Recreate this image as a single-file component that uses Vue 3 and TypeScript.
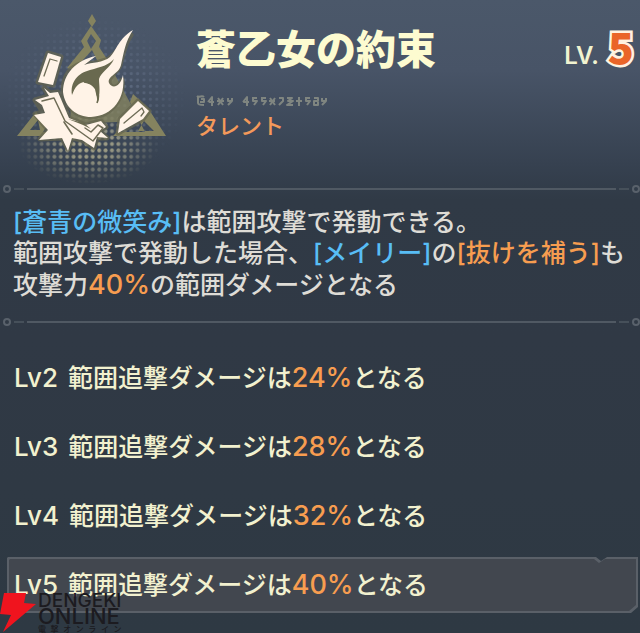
<script setup lang="ts">
type Tone = 'plain' | 'skill' | 'value' | 'value percent'

interface Segment {
  text: string
  tone: Tone
}

interface LevelBonus {
  level: number
  percent: number
}

const currentLevel = 5

const description: Segment[][] = [
  [
    { text: '[蒼青の微笑み]', tone: 'skill' },
    { text: 'は範囲攻撃で発動できる。', tone: 'plain' },
  ],
  [
    { text: '範囲攻撃で発動した場合、', tone: 'plain' },
    { text: '[メイリー]', tone: 'skill' },
    { text: 'の', tone: 'plain' },
    { text: '[抜けを補う]', tone: 'value' },
    { text: 'も', tone: 'plain' },
  ],
  [
    { text: '攻撃力', tone: 'plain' },
    { text: '40%', tone: 'value percent' },
    { text: 'の範囲ダメージとなる', tone: 'plain' },
  ],
]

const bonuses: LevelBonus[] = [
  { level: 2, percent: 24 },
  { level: 3, percent: 28 },
  { level: 4, percent: 32 },
  { level: 5, percent: 40 },
]
</script>

<template>
  <main class="talent">
    <header class="head">
      <svg class="emblem" viewBox="0 0 190 184" aria-hidden="true">
        <defs>
          <pattern id="dots-cool" width="6.4" height="6.4" patternUnits="userSpaceOnUse">
            <circle cx="3.2" cy="3.2" r="1.6" fill="#66738a" />
          </pattern>
          <pattern id="dots-warm" width="6.4" height="6.4" patternUnits="userSpaceOnUse">
            <circle cx="3.2" cy="3.2" r="2" fill="#aaa789" />
          </pattern>
          <radialGradient id="fade-cool">
            <stop offset="0.3" stop-color="#fff" stop-opacity="0.8" />
            <stop offset="1" stop-color="#fff" stop-opacity="0" />
          </radialGradient>
          <radialGradient id="fade-warm">
            <stop offset="0" stop-color="#fff" />
            <stop offset="0.4" stop-color="#fff" stop-opacity="0.75" />
            <stop offset="1" stop-color="#fff" stop-opacity="0" />
          </radialGradient>
          <mask id="mask-cool"><ellipse cx="95" cy="98" rx="92" ry="82" fill="url(#fade-cool)" /></mask>
          <mask id="mask-warm"><ellipse cx="89" cy="146" rx="70" ry="38" fill="url(#fade-warm)" /></mask>
        </defs>
        <rect width="190" height="184" fill="url(#dots-cool)" mask="url(#mask-cool)" />
        <rect width="190" height="184" fill="url(#dots-warm)" mask="url(#mask-warm)" />

        <g fill="#85835f">
          <path d="M92 14L96 21L92 27L88 21Z" />
          <path d="M91 26L101 40L99 47L111 65L103 72L92 50L74 70L67 68L84 47L81 41Z M91 34L87 41L91 49L96 41Z" fill-rule="evenodd" />
          <path d="M17 136L36 112L48 124L43 132H58L64 136Z M30 130H40L38 120Z" fill-rule="evenodd" />
          <path d="M166 136L148 108L133 94L130 102L138 118L145 132H117L113 136Z M138 131L144 121L154 131Z" fill-rule="evenodd" />
          <path d="M72 78L108 62L140 121L70 124Z" opacity="0.8" />
        </g>

        <g stroke="#66664f" fill="#66664f" stroke-width="5" stroke-linejoin="round" opacity="0.7">
          <path d="M48 53L61 57L53 85L38 82Z" />
          <path d="M131 35C120 46 115 56 108 59C100 62 91 64 86 63C70 64 63 77 63 92C65 107 77 117 91 117C112 116 124 98 122 80C118 89 111 89 109 83C108 76 118 72 120 65C123 53 125 43 131 35Z" />
          <path d="M118 133L120 119L138 101L149 111L143 119Z" />
          <path d="M35 100L49 96L44 88L50 93L58 92L69 118L86 125L101 121L106 127L100 131L107 138L97 138L94 148L82 140L72 138L68 149L62 138L40 139L48 130L35 114L43 112Z" />
        </g>
        <g fill="#fff3e7">
          <path d="M48 53L61 57L53 85L38 82Z" />
          <path d="M133 30C119 38 116 51 110 57C103 63 92 62 84 65L96 56C76 60 63 74 63 92C65 108 77 117 91 117C113 116 126 98 123 75C120 88 112 89 109 83C107 76 119 74 121 65C124 52 125 42 133 30Z" />
          <path d="M118 133L120 119L138 101L149 111L143 119Z" />
          <path d="M35 100L49 96L44 88L50 93L58 92L69 118L86 125L101 121L106 127L100 131L108 138L97 137L94 148L82 140L72 138L68 151L62 138L39 140L48 130L34 115L45 113L42 105Z" />
        </g>
        <g fill="none" stroke="#6e6c56" stroke-linecap="round" stroke-linejoin="round">
          <path stroke-width="1.3" d="M57 61L50 59L44 76M124 123L142 108L144 112L141 116" />
          <path stroke-width="1.5" d="M42 101L54 98L65 121L93 141L103 128L98 125L91 132L85 128" />
          <path stroke-width="1.6" d="M64 122L72 134" />
        </g>
        <path fill="#69694f" d="M68 119L84 123L91 129L83 125Z" />
        <path fill="#69694f" d="M72 95C70 82 78 73 90 70C101 67 109 65 114 59C110 68 101 72 99 79C99 85 101 94 97 103C97 94 94 86 85 82C79 82 75 87 72 95Z" />
        <path fill="#fff3e7" d="M79 85C84 81 91 83 95 89L98 104L84 106L74 98Z" />
        <path fill="none" stroke="#69694f" stroke-width="1.6" d="M84 82C96 83 101 94 97 103" />
      </svg>

      <div class="names">
        <h1 class="title">蒼乙女の約束</h1>
        <svg class="runes" viewBox="0 0 132 12" aria-hidden="true">
          <path d="M1 1C3 3 6 0 8 2M2 2V8Q2 10 8 10M5 4H8V7H4M12 7L16 2V11M13 7H18M22 3L27 10M27 3L22 10M21 6H28M32 3V6H36V3M36 6L32 10M47 7L51 2V11M47 7H53M56 3H61M57 3V6H61L58 10M65 3H70M66 3V6H70L67 10M74 3L79 10M79 3L74 10M73 6H79M83 3H87V6L83 10M91 3H96L92 6H97L91 10H97M103 2V11M100 6H106M109 3H114M110 3V6H114L111 10M118 3H122V6H118V10H122V7M126 3V6H130V3M130 6L126 10" />
        </svg>
        <p class="kind">タレント</p>
      </div>

      <p class="level">
        <span class="level-label">LV.</span>
        <strong class="level-number">{{ currentLevel }}</strong>
      </p>
    </header>

    <div class="divider"><i class="ring"></i><i class="dash"></i><i class="line"></i><i class="dash"></i><i class="ring"></i></div>

    <section class="description">
      <p v-for="(line, i) in description" :key="i">
        <span v-for="(part, j) in line" :key="j" :class="part.tone">{{ part.text }}</span>
      </p>
    </section>

    <div class="divider"><i class="ring"></i><i class="dash"></i><i class="line"></i><i class="dash"></i><i class="ring"></i></div>

    <ul class="bonuses">
      <li v-for="b in bonuses" :key="b.level" class="bonus" :class="{ current: b.level === currentLevel }">
        <span class="step">Lv{{ b.level }}</span>
        <p>範囲追撃ダメージは<span class="value percent">{{ b.percent }}%</span>となる</p>
      </li>
    </ul>

    <div class="watermark">
      <svg class="bolt" viewBox="0 0 36 40" aria-hidden="true">
        <path fill="#f0141e" d="M4 1L26 1L24 11L36 12L3 40L11 23L0 22Z" />
      </svg>
      <div class="brand">
        <span>DENGEKI</span>
        <span class="wide">ONLINE</span>
        <small>電撃オンライン</small>
      </div>
    </div>
  </main>
</template>

<style>
body {
  margin: 0;
  background: #2e3843;
}
</style>

<style scoped>
.talent {
  position: relative;
  box-sizing: border-box;
  min-height: 100vh;
  padding-bottom: 20px;
  overflow: hidden;
  background: linear-gradient(180deg, #4b586a 0, #485467 70px, #364150 165px, #303a46 200px, #303945 340px, #2e3943 100%);
  color: #dedcd6;
  font-family: Inter, "Noto Sans CJK JP", sans-serif;
  font-size: 25px;
  font-weight: 500;
}

p,
h1,
ul {
  margin: 0;
  padding: 0;
}

.head {
  display: flex;
  align-items: flex-start;
  height: 184px;
}

.emblem {
  flex: none;
  width: 190px;
  height: 184px;
}

.names {
  flex: 1;
  padding: 25px 0 0 6px;
}

.title {
  color: #fdfbd0;
  font-size: 40px;
  font-weight: 900;
  line-height: 50px;
}

.runes {
  display: block;
  width: 132px;
  height: 12px;
  margin: 20px 0 7px;
  fill: none;
  stroke: #7f8580;
  stroke-width: 2;
  stroke-linejoin: round;
}

.kind {
  color: #f4995a;
  font-size: 22px;
  line-height: 24px;
}

.level {
  display: flex;
  align-items: baseline;
  gap: 9px;
  padding: 20px 6px 0 0;
  color: #f1f3d0;
  line-height: 50px;
}

.level-label {
  font-size: 24px;
  font-weight: 600;
}

.level-number {
  color: #ea6529;
  font-family: "Noto Sans CJK JP", sans-serif;
  font-size: 43px;
  font-weight: 900;
  -webkit-text-stroke: 5px #fff2e0;
  paint-order: stroke fill;
}

.divider {
  display: flex;
  align-items: center;
  gap: 3px;
  height: 10px;
  padding: 0 0 0 3px;
}

.ring {
  box-sizing: border-box;
  width: 8px;
  height: 8px;
  border: 2px solid #59616b;
  border-radius: 50%;
}

.dash {
  width: 10px;
  height: 2px;
  background: #46505a;
}

.line {
  flex: 1;
  height: 2px;
  background: #505963;
}

.description {
  padding: 13px 0 17px 13px;
  line-height: 31px;
  white-space: nowrap;
}

.description p {
  height: 31px;
}

.skill {
  color: #58bdf5;
}

.value {
  color: #f79d50;
}

.bonuses {
  display: grid;
  gap: 13px;
  padding: 23px 2px 0 7px;
  color: #f2f1cf;
  line-height: 56px;
  list-style: none;
}

.bonus {
  display: flex;
  align-items: baseline;
  gap: 10px;
  height: 56px;
  padding-left: 7px;
  white-space: nowrap;
}

.step {
  font-size: 26px;
}

.percent {
  font-size: 27px;
}

.current {
  position: relative;
  z-index: 0;
}

.current::before,
.current::after {
  position: absolute;
  z-index: -1;
  content: "";
  clip-path: polygon(0 1px, 1px 0, calc(100% - 42px) 0, calc(100% - 37px) 4px, calc(100% - 31px) 0, 100% 0, 100% calc(100% - 6px), calc(100% - 7px) 100%, 0 100%);
}

.current::before {
  inset: 0;
  background: #5a6068;
}

.current::after {
  inset: 2px;
  background: #42474f;
}

.watermark {
  position: absolute;
  bottom: 0;
  left: 0;
  z-index: 1;
  display: flex;
  gap: 2px;
}

.bolt {
  width: 36px;
  height: 40px;
}

.brand {
  display: grid;
  grid-template-rows: 16px 17px 8px;
  color: #1c1b20;
  font-size: 19px;
  line-height: 17px;
}

.brand .wide {
  font-size: 22px;
}

.brand small {
  font-size: 8px;
  line-height: 8px;
  text-align-last: justify;
}
</style>
